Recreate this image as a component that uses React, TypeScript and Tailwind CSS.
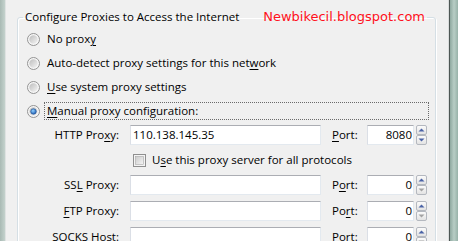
import React from 'react';

type KeyProps = { text: string; at: number };

// label with the access key underlined
const Key: React.FC<KeyProps> = ({ text, at }) => (
  <>
    {text.slice(0, at)}
    <span className="underline underline-offset-[2px]">{text[at]}</span>
    {text.slice(at + 1)}
  </>
);

const Radio: React.FC<{ checked?: boolean }> = ({ checked }) => (
  <svg width="13" height="13" viewBox="0 0 13 13" className="shrink-0">
    <defs>
      <linearGradient id="radioIn" x1="0" y1="0" x2="1" y2="1">
        <stop offset="0" stopColor="#bdbdbd" />
        <stop offset="1" stopColor="#f4f4f4" />
      </linearGradient>
      <radialGradient id="radioDot" cx="0.4" cy="0.35" r="0.7">
        <stop offset="0" stopColor="#8fd0ff" />
        <stop offset="1" stopColor="#1a58b0" />
      </radialGradient>
    </defs>
    <circle cx="6.5" cy="6.5" r="6" fill="#f6f6f6" stroke="#939393" />
    <circle cx="6.5" cy="6.5" r="4.2" fill="url(#radioIn)" />
    {checked && <circle cx="6.5" cy="6.5" r="2.8" fill="url(#radioDot)" stroke="#1f4f8f" strokeWidth="0.6" />}
  </svg>
);

const Checkbox: React.FC = () => (
  <svg width="13" height="13" viewBox="0 0 13 13" className="shrink-0">
    <defs>
      <linearGradient id="cbIn" x1="0" y1="0" x2="1" y2="1">
        <stop offset="0" stopColor="#cbcbcb" />
        <stop offset="1" stopColor="#f5f5f5" />
      </linearGradient>
    </defs>
    <rect x="0.5" y="0.5" width="12" height="12" fill="#f4f4f4" stroke="#8f8f8f" />
    <rect x="2.5" y="2.5" width="8" height="8" fill="url(#cbIn)" stroke="#a9a9a9" strokeWidth="0.6" />
  </svg>
);

const Arrow: React.FC<{ up?: boolean; off?: boolean }> = ({ up, off }) => (
  <svg width="7" height="4" viewBox="0 0 7 4">
    <path d={up ? 'M0.5 3.5 L3.5 0.5 L6.5 3.5 Z' : 'M0.5 0.5 L3.5 3.5 L6.5 0.5 Z'} fill={off ? '#a3a3a3' : '#4a63a6'} />
  </svg>
);

const Spinner: React.FC<{ downOff?: boolean }> = ({ downOff }) => (
  <div className="flex flex-col w-[11px] h-[20px] ml-[2px]">
    <div className="h-[10px] flex items-center justify-center border border-[#b4b8bf] rounded-[2px] bg-gradient-to-b from-[#fbfbfb] to-[#e3e3e3]">
      <Arrow up />
    </div>
    <div className="h-[10px] flex items-center justify-center border border-[#b4b8bf] rounded-[2px] bg-gradient-to-b from-[#fbfbfb] to-[#e3e3e3]">
      <Arrow off={downOff} />
    </div>
  </div>
);

const field =
  'h-[20px] bg-white border border-t-[#abadb3] border-l-[#dbdfe6] border-r-[#e3e9ef] border-b-[#e3e9ef] flex items-center';

type ProxyRow = { label: string; ak: number; host: string; port: string; portKey: number };

const rows: ProxyRow[] = [
  { label: 'SSL Proxy:', ak: 2, host: '', port: '0', portKey: 1 },
  { label: 'FTP Proxy:', ak: 0, host: '', port: '0', portKey: 2 },
  { label: 'SOCKS Host:', ak: 2, host: '', port: '0', portKey: 3 },
];

const HostRow: React.FC<ProxyRow & { downOff?: boolean }> = ({ label, ak, host, port, portKey, downOff }) => (
  <div className="flex items-center h-[20px]">
    <span className="w-[75px] text-right whitespace-nowrap">
      <Key text={label} at={ak} />
    </span>
    <div className={`${field} w-[191px] ml-[11px] pl-[2px]`}>{host}</div>
    <span className="w-[35px] ml-[11px]">
      <Key text="Port:" at={portKey} />
    </span>
    <div className={`${field} w-[47px] justify-end pr-[1px]`}>{port}</div>
    <Spinner downOff={downOff} />
  </div>
);

const options = [
  { text: 'No proxy', at: 7 },
  { text: 'Auto-detect proxy settings for this network', at: 39 },
  { text: 'Use system proxy settings', at: 0 },
  { text: 'Manual proxy configuration:', at: 0, checked: true },
];

export default function App() {
  return (
    <div className="w-[458px] h-[241px] overflow-hidden flex bg-[#f0f0f0] text-[11.5px] leading-[16px] text-black font-['Open_Sans',sans-serif]">
      <div className="w-[6px] shrink-0 flex">
        <div className="w-[5px] bg-gradient-to-r from-[#a9bab4] to-[#c4d2cd]" />
        <div className="w-[1px] bg-[#dfe3e2]" />
      </div>

      <div className="w-[442px] shrink-0 pt-[9px]">
        <fieldset className="ml-[11px] w-[419px] border border-[#d5dfe5] rounded-[3px] shadow-[inset_1px_1px_0_#fff,1px_1px_0_#fff]">
          <legend className="ml-[5px] px-[2px] w-[404px]">
            <div className="flex items-baseline justify-between">
              <span>Configure Proxies to Access the Internet</span>
              <span className="text-[#ff1020] text-[13px] font-['DejaVu_Sans',sans-serif]">Newbikecil.blogspot.com</span>
            </div>
          </legend>

          <div className="pt-[2px] pl-[9px]">
            {options.map((o) => (
              <div key={o.text} className="flex items-center h-[24px]">
                <Radio checked={o.checked} />
                <span
                  className={`ml-[4px] h-[18px] px-[2px] flex items-center border border-dotted ${
                    o.checked ? 'border-[#6a6a6a] w-[385px]' : 'border-transparent'
                  }`}
                >
                  <Key text={o.text} at={o.at} />
                </span>
              </div>
            ))}
          </div>

          <div className="pl-[26px] mt-[2px]">
            <HostRow label="HTTP Proxy:" ak={8} host="110.138.145.35" port="8080" portKey={0} />
            <div className="flex items-center h-[30px]">
              <div className="ml-[89px] flex items-center">
                <Checkbox />
                <span className="ml-[6px]">
                  <Key text="Use this proxy server for all protocols" at={1} />
                </span>
              </div>
            </div>
            <div className="flex flex-col gap-[6px]">
              {rows.map((r) => (
                <HostRow key={r.label} {...r} downOff />
              ))}
            </div>
          </div>
        </fieldset>
      </div>

      <div className="w-[10px] shrink-0 flex">
        <div className="w-[1px] bg-[#d9dcdc]" />
        <div className="w-[1px] bg-[#4d5654]" />
        <div className="flex-1 bg-gradient-to-r from-[#8fa9a0] via-[#b8cdc5] to-[#98b2a9]" />
      </div>
    </div>
  );
}
